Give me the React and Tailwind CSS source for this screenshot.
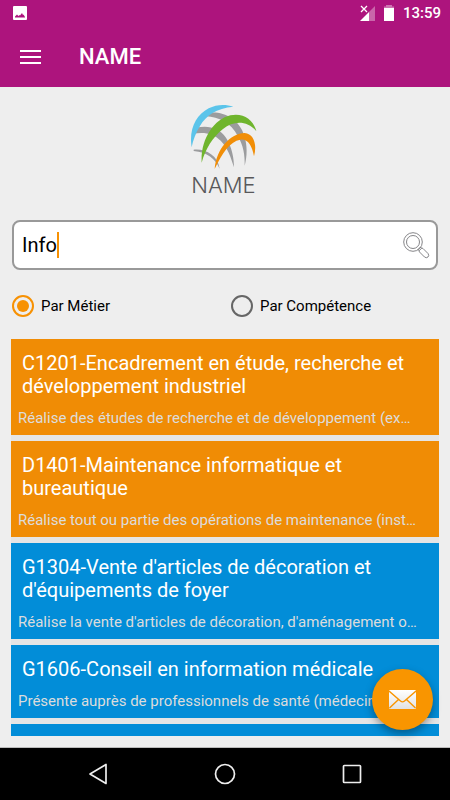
import { useState } from "react";

const JOBS = [
  {
    title: "C1201-Encadrement en étude, recherche et développement industriel",
    text: "Réalise des études de recherche et de développement (ex…",
    tone: "bg-[#f08c05]",
  },
  {
    title: "D1401-Maintenance informatique et bureautique",
    text: "Réalise tout ou partie des opérations de maintenance (inst…",
    tone: "bg-[#f08c05]",
  },
  {
    title: "G1304-Vente d'articles de décoration et d'équipements de foyer",
    text: "Réalise la vente d'articles de décoration, d'aménagement o…",
    tone: "bg-[#028dd8]",
  },
  {
    title: "G1606-Conseil en information médicale",
    text: "Présente auprès de professionnels de santé (médecins…",
    tone: "bg-[#028dd8]",
  },
];

function StatusBar() {
  return (
    <div className="flex h-[26px] items-center pl-[13px] pr-[9px]">
      <svg className="h-[14px] w-[14px]" viewBox="0 0 14 14" aria-hidden="true">
        <rect width="14" height="14" rx="1" fill="#fff" />
        <path d="M2 11.5V10.500L4 8.500 5.500 10 6.500 9 7 9.500 9 7 10 9 10.500 8.500 12 11V11.500z" fill="#ad147d" />
      </svg>
      <div className="ml-auto flex items-center">
        <svg className="h-4 w-[15px]" viewBox="0 0 15 16" aria-hidden="true">
          <path d="M9 7 15 1V16H9z" fill="#fff" opacity=".35" />
          <path d="M0 16 9 7V16z" fill="#fff" />
          <path d="M1 1 7 7M7 1 1 7" stroke="#fff" strokeWidth="1.3" />
        </svg>
        <svg className="ml-[9px] h-4 w-[10px]" viewBox="0 0 10 16" aria-hidden="true">
          <path d="M2 0H8V1.500H10V4H0V1.500H2z" fill="#fff" opacity=".4" />
          <rect y="3" width="10" height="13" fill="#fff" />
        </svg>
        <span className="ml-[9px] text-[15px] font-medium leading-6">13:59</span>
      </div>
    </div>
  );
}

function Logo() {
  return (
    <div className="flex flex-col items-center pr-[3px] text-[#58585a]">
      <svg className="h-[67px] w-[67px]" viewBox="30 27 201 201" aria-hidden="true">
        <path d="M88 53C130 48 178 72 193 122C202 152 202 182 194 212C195 180 190 150 173 122C153 84 116 66 78 64z" fill="#9b9c9e" />
        <path d="M48 98C84 90 117 97 138 128C156 156 162 190 162 217C153 188 143 158 122 137C101 115 72 110 40 116z" fill="#9b9c9e" />
        <path d="M41 164C78 161 113 181 119 221C105 190 82 172 41 168z" fill="#9b9c9e" />
        <path d="M35 157C26 103 48 60 86 40C109 28 137 27 160 35C110 39 77 62 60 93C47 114 39 136 35 157z" fill="#5bc4ea" />
        <path d="M65 203C61 134 101 73 151 61C189 53 219 73 229 108C201 76 161 76 129 102C97 128 77 161 65 203z" fill="#6fb52d" />
        <path d="M104 222C108 164 151 114 194 114C221 117 232 147 222 184C216 151 203 131 181 134C149 139 126 176 104 222z" fill="#f18e07" />
      </svg>
      <span className="mt-[2px] font-['Inter','Roboto',sans-serif] text-[22px] font-light leading-6">NAME</span>
    </div>
  );
}

function SearchIcon() {
  return (
    <svg className="h-[27px] w-[27px]" viewBox="0 0 27 27" fill="none" stroke="#77777a" strokeWidth=".9" aria-hidden="true">
      <circle cx="10" cy="10" r="9.300" />
      <circle cx="10" cy="10" r="6.500" />
      <path d="M15 17.500 17.500 15 19 16.500 16.500 19z" />
      <path d="M16.500 18.300 18.300 16.500Q19 15.700 20 16.500L25 21.500Q26.500 23.500 25 25Q23.300 26.500 21.500 25L16.500 20Q15.700 19 16.500 18.300z" fill="#fff" />
    </svg>
  );
}

function SearchBox({ value, onChange }) {
  return (
    <div className="relative flex h-[50px] items-center rounded-lg border-2 border-[#999] bg-white pl-2 pr-[6px] text-[20px] leading-6 text-black">
      <input
        type="text"
        aria-label="Recherche"
        value={value}
        onChange={(e) => onChange(e.target.value)}
        className="min-w-0 flex-1 bg-transparent caret-transparent outline-none"
      />
      <span className="pointer-events-none absolute left-2 flex items-center" aria-hidden="true">
        <span className="invisible whitespace-pre">{value}</span>
        <span className="h-[26px] w-[2px] bg-[#f79103]" />
      </span>
      <button type="button" aria-label="Rechercher">
        <SearchIcon />
      </button>
    </div>
  );
}

function Choice({ label, checked, onSelect }) {
  return (
    <label className="flex items-center gap-[7px] text-[15px] leading-6 text-black">
      <span className="grid place-items-center">
        <input
          type="radio"
          name="mode"
          checked={checked}
          onChange={onSelect}
          className="peer col-start-1 row-start-1 h-[22px] w-[22px] appearance-none rounded-full border-2 border-[#666] checked:border-[#f79103]"
        />
        <span className="pointer-events-none col-start-1 row-start-1 hidden h-3 w-3 rounded-full bg-[#f79103] peer-checked:block" />
      </span>
      {label}
    </label>
  );
}

export default function App() {
  const [query, setQuery] = useState("Info");
  const [mode, setMode] = useState("metier");

  return (
    <div className="flex h-screen flex-col bg-[#eee] font-['Roboto',sans-serif]">
      <header className="shrink-0 bg-[#ad147d] text-white">
        <StatusBar />
        <div className="flex h-[61px] items-center pl-5">
          <button type="button" aria-label="Menu" className="flex w-[21px] flex-col gap-1">
            <span className="h-[2px] bg-white" />
            <span className="h-[2px] bg-white" />
            <span className="h-[2px] bg-white" />
          </button>
          <h1 className="ml-[38px] text-[22px] font-medium leading-7">NAME</h1>
        </div>
      </header>

      <main className="relative flex min-h-0 flex-1 flex-col px-[11px] pb-[11px] pt-[17px]">
        <Logo />
        <div className="mt-[23px] px-px">
          <SearchBox value={query} onChange={setQuery} />
          <div className="mt-6 grid grid-cols-[219px_1fr]">
            <Choice label="Par Métier" checked={mode === "metier"} onSelect={() => setMode("metier")} />
            <Choice label="Par Compétence" checked={mode === "competence"} onSelect={() => setMode("competence")} />
          </div>
        </div>

        <ul className="mt-[21px] flex min-h-0 flex-1 flex-col gap-[6px] overflow-hidden bg-[#e5e5e5]">
          {JOBS.map((job) => (
            <li key={job.title} className={`shrink-0 px-[7px] pb-[7px] pt-[13px] ${job.tone}`}>
              <h2 className="px-1 text-[20px] leading-[23px] text-white">{job.title}</h2>
              <p className="mt-[10px] truncate text-[15px] leading-5 text-[#dcdcdc]">{job.text}</p>
            </li>
          ))}
          <li className="h-24 shrink-0 bg-[#028dd8]" />
        </ul>

        <button
          type="button"
          aria-label="Contact"
          className="absolute bottom-[17px] right-[17px] flex h-[61px] w-[61px] items-center justify-center rounded-full bg-[#f99500] shadow-[0_4px_8px_rgba(0,0,0,0.35)]"
        >
          <svg className="h-[19px] w-[27px]" viewBox="0 0 27 19" aria-hidden="true">
            <defs>
              <linearGradient id="paper" x1="0" y1="0" x2="0" y2="1">
                <stop offset="0" stopColor="#fff" />
                <stop offset="1" stopColor="#e2e2e2" />
              </linearGradient>
            </defs>
            <rect width="27" height="19" rx="1" fill="url(#paper)" />
            <path d="M0 1 11.500 11Q13.500 12.700 15.500 11L27 1M.5 18 9.500 9.500M26.500 18 17.500 9.500" fill="none" stroke="#f99500" strokeWidth="1.400" />
          </svg>
        </button>
      </main>

      <nav className="flex h-[53px] shrink-0 items-center border-t border-[#bbb] bg-black px-[34px]">
        <button type="button" aria-label="Retour" className="flex flex-1 justify-center">
          <svg className="h-[22px] w-[22px]" viewBox="0 0 22 22" fill="none" stroke="#eee" strokeWidth="1.700" strokeLinejoin="round" aria-hidden="true">
            <path d="M19 1.500V20.500L3 11z" />
          </svg>
        </button>
        <button type="button" aria-label="Accueil" className="flex flex-1 justify-center">
          <svg className="h-[22px] w-[22px]" viewBox="0 0 22 22" fill="none" stroke="#eee" strokeWidth="1.700" aria-hidden="true">
            <circle cx="11" cy="11" r="9.500" />
          </svg>
        </button>
        <button type="button" aria-label="Applications récentes" className="flex flex-1 justify-center">
          <svg className="h-[22px] w-[22px]" viewBox="0 0 22 22" fill="none" stroke="#eee" strokeWidth="1.700" aria-hidden="true">
            <rect x="2.500" y="2.500" width="17" height="17" rx=".8" />
          </svg>
        </button>
      </nav>
    </div>
  );
}
